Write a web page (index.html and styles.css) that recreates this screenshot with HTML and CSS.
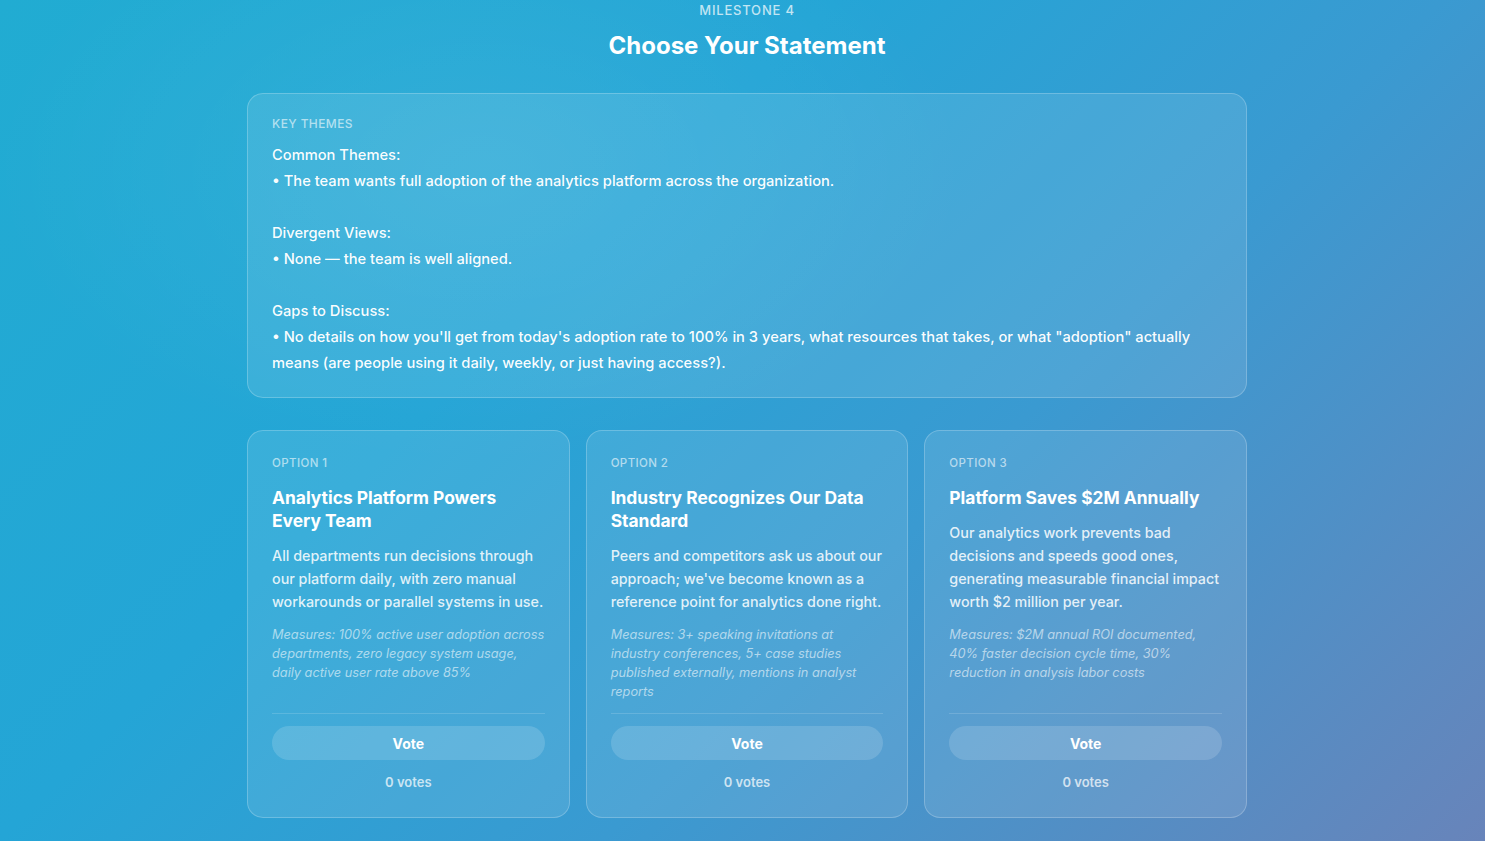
FILE: index.html
```html
<!DOCTYPE html>
<html lang="en">
<head>
<meta charset="utf-8">
<title>Choose Your Statement</title>
<link rel="stylesheet" href="styles.css">
</head>
<body>
<div class="page">
  <main class="container">
    <header class="head">
      <div class="eyebrow">MILESTONE 4</div>
      <h1 class="title">Choose Your Statement</h1>
    </header>

    <section class="themes">
      <div class="label">KEY THEMES</div>
      <div class="themes-body">Common Themes:
• The team wants full adoption of the analytics platform across the organization.

Divergent Views:
• None — the team is well aligned.

Gaps to Discuss:
• No details on how you'll get from today's adoption rate to 100% in 3 years, what resources that takes, or what "adoption" actually means (are people using it daily, weekly, or just having access?).</div>
    </section>

    <section class="options">
      <article class="option">
        <div class="label">OPTION 1</div>
        <h2 class="opt-title">Analytics Platform Powers Every Team</h2>
        <p class="opt-desc">All departments run decisions through our platform daily, with zero manual workarounds or parallel systems in use.</p>
        <p class="opt-measures">Measures: 100% active user adoption across departments, zero legacy system usage, daily active user rate above 85%</p>
        <div class="opt-foot">
          <button class="vote">Vote</button>
          <div class="count">0 votes</div>
        </div>
      </article>
      <article class="option">
        <div class="label">OPTION 2</div>
        <h2 class="opt-title">Industry Recognizes Our Data Standard</h2>
        <p class="opt-desc">Peers and competitors ask us about our approach; we've become known as a reference point for analytics done right.</p>
        <p class="opt-measures">Measures: 3+ speaking invitations at industry conferences, 5+ case studies published externally, mentions in analyst reports</p>
        <div class="opt-foot">
          <button class="vote">Vote</button>
          <div class="count">0 votes</div>
        </div>
      </article>
      <article class="option">
        <div class="label">OPTION 3</div>
        <h2 class="opt-title">Platform Saves $2M Annually</h2>
        <p class="opt-desc">Our analytics work prevents bad decisions and speeds good ones, generating measurable financial impact worth $2 million per year.</p>
        <p class="opt-measures">Measures: $2M annual ROI documented, 40% faster decision cycle time, 30% reduction in analysis labor costs</p>
        <div class="opt-foot">
          <button class="vote">Vote</button>
          <div class="count">0 votes</div>
        </div>
      </article>
    </section>
  </main>
</div>
</body>
</html>
```

FILE: styles.css
```css
* { box-sizing: border-box; }

html, body {
  margin: 0;
  padding: 0;
  height: 100%;
}

body {
  font-family: Inter, "Noto Sans", "Liberation Sans", sans-serif;
  color: #fff;
  background:
    radial-gradient(ellipse 700px 420px at 480px 170px, rgba(255,255,255,0.07), rgba(255,255,255,0) 70%),
    linear-gradient(135deg, #21acd2 0%, #24a5d6 36%, #3a9ad1 62%, #6884ba 100%);
  min-height: 841px;
  overflow: hidden;
}

.page {
  padding-left: 9px;
}

.container {
  width: 1000px;
  margin: 0 auto;
}

.head {
  text-align: center;
}

.eyebrow {
  font-size: 13px;
  line-height: 20px;
  letter-spacing: 0.8px;
  font-weight: 500;
  color: rgba(255,255,255,0.72);
}

.title {
  margin: 10px 0 0;
  font-size: 24px;
  line-height: 32px;
  font-weight: 700;
}

.label {
  font-size: 12px;
  line-height: 16px;
  letter-spacing: 0.4px;
  font-weight: 500;
  color: rgba(255,255,255,0.6);
}

.themes {
  margin-top: 31px;
  padding: 22px 24px 21px;
  border: 1px solid rgba(255,255,255,0.22);
  border-radius: 16px;
  background: rgba(255,255,255,0.1);
}

.themes-body {
  margin-top: 10px;
  font-size: 14.7px;
  line-height: 26px;
  font-weight: 500;
  white-space: pre-line;
  color: rgba(255,255,255,0.97);
}

.options {
  margin-top: 32px;
  display: grid;
  grid-template-columns: repeat(3, 1fr);
  gap: 16px;
}

.option {
  display: flex;
  flex-direction: column;
  padding: 24px 24px 25px;
  border: 1px solid rgba(255,255,255,0.22);
  border-radius: 16px;
  background: rgba(255,255,255,0.1);
}

.option .label {
  font-size: 11.5px;
}

.opt-title {
  margin: 15px 0 0;
  font-size: 17.4px;
  line-height: 23px;
  font-weight: 700;
}

.opt-desc {
  margin: 12px 0 0;
  font-size: 14.3px;
  line-height: 23px;
  font-weight: 500;
  color: rgba(255,255,255,0.86);
}

.opt-measures {
  margin: 12px 0 12px;
  font-size: 12.8px;
  letter-spacing: -0.03px;
  line-height: 19px;
  font-style: italic;
  font-weight: 400;
  color: rgba(255,255,255,0.58);
}

.opt-foot {
  margin-top: auto;
  padding-top: 12px;
  border-top: 1px solid rgba(255,255,255,0.15);
  display: flex;
  flex-direction: column;
  align-items: stretch;
}

.vote {
  height: 34px;
  border: none;
  border-radius: 17px;
  background: rgba(255,255,255,0.15);
  color: #fff;
  font-family: inherit;
  font-size: 14px;
  font-weight: 700;
  cursor: pointer;
}

.count {
  margin-top: 12px;
  text-align: center;
  font-size: 13px;
  line-height: 20px;
  font-weight: 600;
  color: rgba(255,255,255,0.72);
}
```
